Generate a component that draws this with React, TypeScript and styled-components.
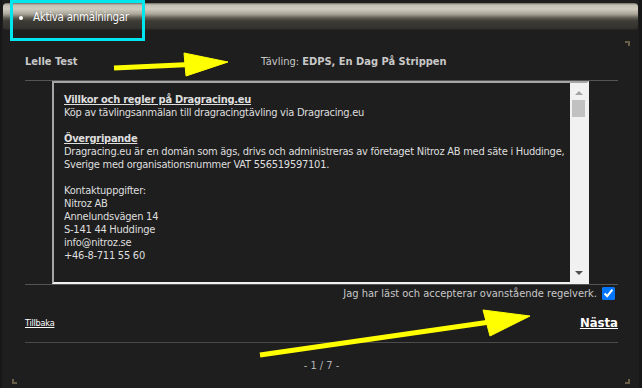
import styled, { createGlobalStyle } from "styled-components";

const GlobalStyle = createGlobalStyle`
  html, body {
    margin: 0;
    padding: 0;
    background: #1e1e1e;
  }
  body {
    font-family: "DejaVu Sans Condensed", "DejaVu Sans", Tahoma, sans-serif;
    font-size: 11px;
    color: #d4d4d4;
  }
`;

const Page = styled.div`
  position: relative;
  width: 642px;
  height: 388px;
  box-sizing: border-box;
  border-left: 2px solid #171717;
  border-right: 3px solid #171717;
  padding-top: 3px;
  overflow: hidden;
`;

const TopBar = styled.div`
  height: 27px;
  margin: 0 1px 0 1px;
  border-radius: 4px;
  background: linear-gradient(
    to bottom,
    #6e6b62 0px,
    #c4c0b4 2px,
    #cfcbbf 6px,
    #aaa699 11px,
    #5e5b53 15px,
    #3d3b35 18px,
    #35332e 25px,
    #262523 27px
  );
  display: flex;
  align-items: center;
`;

const TabList = styled.ul`
  margin: 0;
  padding: 0 0 0 30px;
  list-style: disc;
  color: #ffffff;
  font-size: 11.5px;
  letter-spacing: -0.3px;
`;

const Tab = styled.li`
  text-shadow: 0 0 1px rgba(0, 0, 0, 0.4);
`;

const Panel = styled.div`
  position: relative;
  margin: 11px 9px 0 10px;
  height: 343px;
  padding: 0 12px 0 13px;
`;

const Corner = styled.span<{ $v: "top" | "bottom"; $h: "left" | "right" }>`
  position: absolute;
  width: 3px;
  height: 3px;
  ${(p) => p.$v}: 0;
  ${(p) => p.$h}: 0;
  border-${(p) => p.$v}: 2px solid #6a5e48;
  border-${(p) => p.$h}: 2px solid #6a5e48;
`;

const HeaderRow = styled.div`
  display: grid;
  grid-template-columns: 236px 1fr;
  align-items: center;
  height: 38px;
  padding-top: 1px;
  color: #c8c8c8;
  font-size: 11px;
  border-bottom: 1px solid #555555;
`;

const Rider = styled.div`
  font-weight: bold;
`;

const Event = styled.div`
  strong {
    font-weight: bold;
  }
`;

const TermsBox = styled.div`
  display: flex;
  margin-left: 27px;
  width: 537px;
  height: 203px;
  box-sizing: border-box;
  border-style: solid;
  border-width: 2px;
  border-color: #a6a6a6 #f0f0f0 #f0f0f0 #a6a6a6;
`;

const TermsText = styled.div`
  flex: 1;
  overflow: hidden;
  padding: 10px 0 0 10px;
  line-height: 13px;
  letter-spacing: -0.25px;
  white-space: nowrap;
  color: #dedede;
`;

const TermsHeading = styled.div`
  font-weight: bold;
  text-decoration: underline;
`;

const Gap = styled.div`
  height: 13px;
`;

const ScrollBar = styled.div`
  width: 17px;
  background: #f1f1f1;
  display: flex;
  flex-direction: column;
  align-items: center;
`;

const Arrow = styled.div<{ $dir: "up" | "down" }>`
  width: 0;
  height: 0;
  border-left: 4px solid transparent;
  border-right: 4px solid transparent;
  ${(p) =>
    p.$dir === "up"
      ? "border-bottom: 4px solid #a3a3a3; margin-top: 8px;"
      : "border-top: 4px solid #505050; margin-bottom: 7px;"}
`;

const Thumb = styled.div`
  width: 13px;
  height: 17px;
  margin-top: 5px;
  background: #c1c1c1;
`;

const Track = styled.div`
  flex: 1;
`;

const Divider = styled.div`
  height: 1px;
  background: #555555;
`;

const AcceptRow = styled.label`
  display: flex;
  justify-content: flex-end;
  align-items: center;
  gap: 5px;
  height: 17px;
  padding-right: 3px;
  color: #c8c8c8;
  font-size: 11px;
`;

const Check = styled.input`
  margin: 0;
  width: 13px;
  height: 13px;
  accent-color: #0075ff;
`;

const NavRow = styled.div`
  display: flex;
  justify-content: space-between;
  align-items: center;
  height: 40px;
  border-bottom: 1px solid #4a4a4a;
`;

const NavLink = styled.a<{ $primary?: boolean }>`
  color: #ffffff;
  text-decoration: underline;
  font-size: ${(p) => (p.$primary ? "13px" : "9px")};
  font-weight: ${(p) => (p.$primary ? "bold" : "normal")};
  letter-spacing: ${(p) => (p.$primary ? "0" : "-0.2px")};
  margin-top: ${(p) => (p.$primary ? "0" : "1px")};
`;

const Pager = styled.div`
  text-align: center;
  padding-top: 16px;
  color: #b4b4b4;
  font-size: 11px;
`;

const Highlight = styled.div`
  position: absolute;
  left: 8px;
  top: 0;
  width: 135px;
  height: 41px;
  box-sizing: border-box;
  border: 3px solid #00e6ee;
`;

const Overlay = styled.svg`
  position: absolute;
  left: -2px;
  top: 0;
  pointer-events: none;
`;

function App() {
  return (
    <>
      <GlobalStyle />
      <Page>
        <TopBar>
          <TabList>
            <Tab>Aktiva anmälningar</Tab>
          </TabList>
        </TopBar>
        <Panel>
          <Corner $v="top" $h="right" />
          <Corner $v="bottom" $h="left" />
          <Corner $v="bottom" $h="right" />
          <HeaderRow>
            <Rider>Lelle Test</Rider>
            <Event>
              Tävling: <strong>EDPS, En Dag På Strippen</strong>
            </Event>
          </HeaderRow>
          <TermsBox>
            <TermsText>
              <TermsHeading>Villkor och regler på Dragracing.eu</TermsHeading>
              <div>Köp av tävlingsanmälan till dragracingtävling via Dragracing.eu</div>
              <Gap />
              <TermsHeading>Övergripande</TermsHeading>
              <div>
                Dragracing.eu är en domän som ägs, drivs och administreras av företaget Nitroz AB med säte i Huddinge,
              </div>
              <div>Sverige med organisationsnummer VAT 556519597101.</div>
              <Gap />
              <div>Kontaktuppgifter:</div>
              <div>Nitroz AB</div>
              <div>Annelundsvägen 14</div>
              <div>S-141 44 Huddinge</div>
              <div>info@nitroz.se</div>
              <div>+46-8-711 55 60</div>
            </TermsText>
            <ScrollBar>
              <Arrow $dir="up" />
              <Thumb />
              <Track />
              <Arrow $dir="down" />
            </ScrollBar>
          </TermsBox>
          <Divider />
          <AcceptRow>
            Jag har läst och accepterar ovanstående regelverk.
            <Check type="checkbox" defaultChecked />
          </AcceptRow>
          <NavRow>
            <NavLink href="#">Tillbaka</NavLink>
            <NavLink href="#" $primary>
              Nästa
            </NavLink>
          </NavRow>
          <Pager>- 1 / 7 -</Pager>
        </Panel>
        <Highlight />
        <Overlay width="642" height="388" viewBox="0 0 642 388">
          <g fill="#ffff00" stroke="#ffff00" strokeLinejoin="round">
            <line x1="114" y1="68" x2="190" y2="64.5" strokeWidth="5" />
            <polygon points="184,53 228,62 186,76" strokeWidth="1" />
            <line x1="260" y1="355" x2="490" y2="322" strokeWidth="5" />
            <polygon points="483,310 530,316 490,336" strokeWidth="1" />
          </g>
        </Overlay>
      </Page>
    </>
  );
}

export default App;
